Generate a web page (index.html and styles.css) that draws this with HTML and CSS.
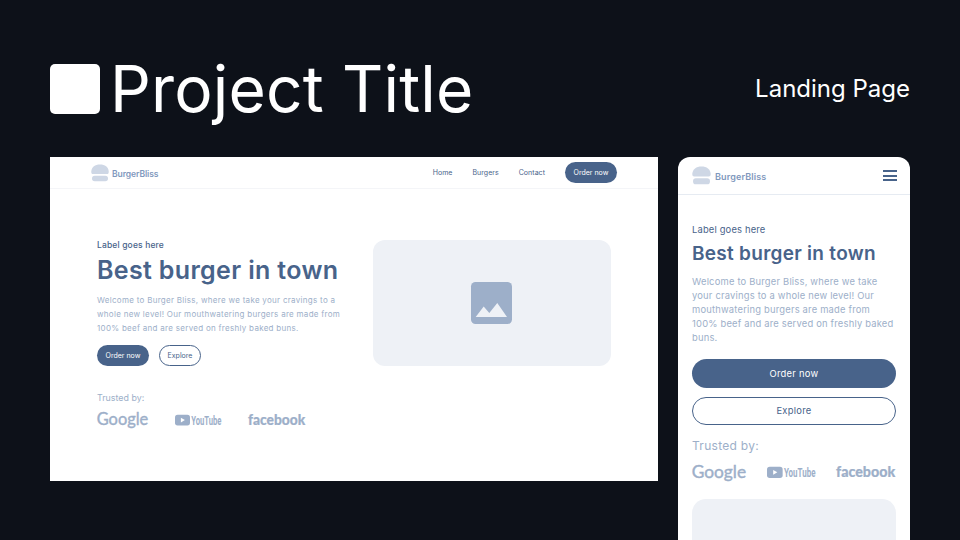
FILE: index.html
```
<!DOCTYPE html>
<html lang="en">
<head>
<meta charset="utf-8">
<title>Project Title</title>
<link rel="stylesheet" href="styles.css">
</head>
<body>
<svg class="defs" aria-hidden="true">
  <symbol id="burger" viewBox="0 0 18 18"><path d="M2.200 10C.6 10 .2 9 .3 7.400.6 3 4 .5 9 .5s8.400 2.500 8.700 6.900c.1 1.600-.3 2.600-1.900 2.600z"/><rect x="1" y="11.700" width="16" height="5.600" rx="2.700"/></symbol>
  <symbol id="google" viewBox="0 0 52 18"><text x="-.3" y="14" font-family="Lato, sans-serif" font-size="17" font-weight="400" stroke="currentColor" stroke-width=".4" textLength="51.500" lengthAdjust="spacingAndGlyphs">Google</text></symbol>
  <symbol id="youtube" viewBox="0 0 47 12"><rect x="0" y=".8" width="15" height="10.600" rx="2.600"/><path d="M5.900 3.800v4.600l4-2.300z" fill="#fff"/><text x="16.200" y="10.700" font-family="Roboto, sans-serif" font-size="12.800" font-weight="700" textLength="30.300" lengthAdjust="spacingAndGlyphs">YouTube</text></symbol>
  <symbol id="facebook" viewBox="0 0 58 14"><text x="0" y="12" font-family="Lato, sans-serif" font-size="14.800" font-weight="900" stroke="currentColor" stroke-width=".2" textLength="57.200" lengthAdjust="spacingAndGlyphs">facebook</text></symbol>
</svg>
<header class="top">
  <div class="mark"></div>
  <h1 class="title">Project Title</h1>
  <p class="kind">Landing Page</p>
</header>
<main class="boards">
  <section class="desktop">
    <nav class="bar">
      <svg class="burger"><use href="#burger"/></svg>
      <span class="brand">BurgerBliss</span>
      <div class="links"><span>Home</span><span>Burgers</span><span>Contact</span></div>
      <a class="btn solid">Order now</a>
    </nav>
    <div class="hero">
      <div class="copy">
        <p class="label">Label goes here</p>
        <h2 class="head">Best burger in town</h2>
        <p class="body">Welcome to Burger Bliss, where we take your cravings to a<br>whole new level! Our mouthwatering burgers are made from<br>100% beef and are served on freshly baked buns.</p>
        <div class="actions"><a class="btn solid">Order now</a><a class="btn line">Explore</a></div>
        <p class="trust">Trusted by:</p>
        <div class="logos"><svg class="lg"><use href="#google"/></svg><svg class="ly"><use href="#youtube"/></svg><svg class="lf"><use href="#facebook"/></svg></div>
      </div>
      <div class="media"><svg viewBox="0 0 41 42"><rect width="41" height="42" rx="4.500" fill="#9dafc9"/><path d="M4.700 35l8-10.500 5.600 6.500 8-10L36 35z" fill="#eef1f6"/></svg></div>
    </div>
  </section>
  <section class="mobile">
    <nav class="mbar">
      <svg class="burger"><use href="#burger"/></svg>
      <span class="brand">BurgerBliss</span>
      <div class="menu"><i></i><i></i><i></i></div>
    </nav>
    <div class="mcopy">
      <p class="label">Label goes here</p>
      <h2 class="head">Best burger in town</h2>
      <p class="body">Welcome to Burger Bliss, where we take<br>your cravings to a whole new level! Our<br>mouthwatering burgers are made from<br>100% beef and are served on freshly baked<br>buns.</p>
      <a class="btn solid">Order now</a>
      <a class="btn line">Explore</a>
      <p class="trust">Trusted by:</p>
      <div class="logos"><svg class="lg"><use href="#google"/></svg><svg class="ly"><use href="#youtube"/></svg><svg class="lf"><use href="#facebook"/></svg></div>
      <div class="preview"></div>
    </div>
  </section>
</main>
</body>
</html>
```
FILE: styles.css
```
* { box-sizing: border-box; margin: 0; padding: 0; }
body { width: 960px; height: 540px; overflow: hidden; background: #0d1119; font-family: Inter, sans-serif; color: #48638a; }
h1, h2 { font-weight: 400; }
.defs { display: none; }
svg { fill: currentColor; flex: none; overflow: visible; }
symbol { overflow: visible; }

.top { display: flex; align-items: center; height: 157px; padding: 20px 50px 0; color: #fff; }
.mark { width: 50px; height: 50px; border-radius: 5px; background: #fff; }
.title { margin-left: 10px; font-size: 64px; line-height: 78px; letter-spacing: .18px; }
.kind { margin-left: auto; font-size: 24px; }

.boards { display: flex; align-items: flex-start; gap: 20px; padding: 0 50px; }
.desktop { width: 608px; height: 323.5px; background: #fff; }
.mobile { width: 232px; height: 383px; border-radius: 12px 12px 0 0; background: #fff; overflow: hidden; }

.burger { width: 18px; height: 18px; color: #ced7e5; }
.brand { font-size: 8.5px; line-height: 12px; font-weight: 600; letter-spacing: -.07px; color: #7f98bd; }
.btn { display: flex; align-items: center; justify-content: center; border-radius: 20px; font-size: 7px; }
.solid { background: #48638a; color: #fff; }
.line { border: 1px solid #48638a; }
.body { color: #9dafc9; line-height: 14px; white-space: nowrap; }
.head { font-weight: 600; white-space: nowrap; }
.trust, .logos { color: #9dafc9; }
.logos { display: flex; align-items: center; }

.bar { display: flex; align-items: center; height: 32px; padding: 0 41px; border-bottom: 1px solid #f4f5f8; }
.bar .brand { margin: 2px 0 0 3px; }
.links { display: flex; gap: 20px; margin-left: auto; margin-right: 20px; font-size: 7px; letter-spacing: .04px; }
.desktop .btn { height: 21px; }
.desktop .solid { width: 52px; }
.desktop .line { width: 42px; }
.hero { display: flex; justify-content: space-between; padding: 51px 47px 0; }
.label { font-size: 8.5px; line-height: 10px; font-weight: 500; letter-spacing: .15px; }
.head { margin-top: 4px; font-size: 25px; line-height: 32px; letter-spacing: .34px; }
.body { margin-top: 7px; font-size: 8px; letter-spacing: .29px; }
.actions { display: flex; gap: 10px; margin-top: 10px; }
.trust { margin-top: 26px; font-size: 8.9px; line-height: 12px; }
.logos { margin-top: 7px; }
.lg { width: 52px; height: 18px; }
.ly { width: 47px; height: 12px; margin-left: 26px; }
.lf { width: 58px; height: 14px; margin-left: 26px; }
.media { display: flex; align-items: center; justify-content: center; width: 238px; height: 126px; border-radius: 12px; background: #eef1f6; }
.media svg { width: 41px; height: 42px; margin-right: 1px; }

.mbar { display: flex; align-items: center; height: 38px; padding: 0 13px 0 14px; border-bottom: 1px solid #e6ebf2; }
.mobile .burger { width: 19px; height: 19px; }
.mobile .brand { margin: 2px 0 0 4px; font-size: 9px; letter-spacing: .13px; }
.menu { display: grid; gap: 2.500px; width: 14px; margin-left: auto; }
.menu i { height: 2px; background: #48638a; }
.mcopy { padding: 29px 14px 0; }
.mobile .label { font-size: 9.4px; line-height: 12px; font-weight: 400; letter-spacing: .17px; }
.mobile .head { margin-top: 6px; font-size: 19px; line-height: 24px; letter-spacing: .28px; }
.mobile .body { margin-top: 9px; font-size: 9.4px; letter-spacing: .2px; }
.mobile .btn { height: 28.500px; font-size: 9.4px; letter-spacing: .26px; }
.mobile .body + .btn { margin-top: 14px; }
.mobile .line { margin-top: 9px; }
.mobile .trust { margin-top: 13px; font-size: 12px; line-height: 15px; letter-spacing: .29px; }
.mobile .logos { justify-content: space-between; margin-top: 10px; }
.mobile .lg { width: 55px; height: 19px; }
.mobile .ly { width: 49px; height: 12.500px; margin: 0; }
.mobile .lf { width: 60px; height: 14.500px; margin: 0; }
.preview { height: 126px; margin-top: 17px; border-radius: 14px; background: #eef1f6; }
```
